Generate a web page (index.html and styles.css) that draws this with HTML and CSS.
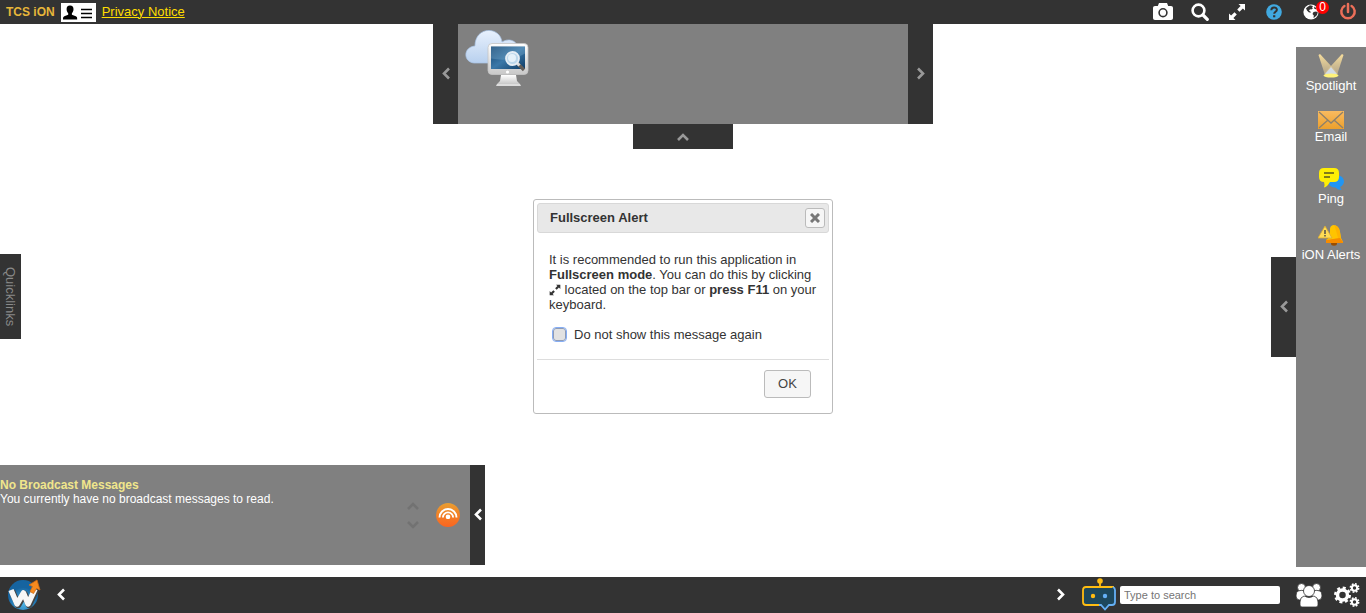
FILE: index.html
```html
<!DOCTYPE html>
<html lang="en">
<head>
<meta charset="utf-8">
<title>TCS iON</title>
<link rel="stylesheet" href="styles.css">
</head>
<body>
<svg class="sprite" aria-hidden="true">
  <symbol id="left" viewBox="0 0 10 14"><path d="M8 1.500 3 6.500l5 5" fill="none" stroke="currentColor" stroke-width="2.600"/></symbol>
  <symbol id="right" viewBox="0 0 10 14"><path d="m2 1.500 5 5-5 5" fill="none" stroke="currentColor" stroke-width="2.600"/></symbol>
  <symbol id="up" viewBox="0 0 14 10"><path d="m2 8 5-5 5 5" fill="none" stroke="currentColor" stroke-width="2.600"/></symbol>
  <symbol id="down" viewBox="0 0 14 10"><path d="m2 2 5 5 5-5" fill="none" stroke="currentColor" stroke-width="2.600"/></symbol>
  <symbol id="expand" viewBox="0 0 18 18"><path d="M10.500 1H17v6.500L14.900 5.400 11.500 8.800 9.200 6.500l3.400-3.400zM7.500 17H1v-6.500l2.100 2.100 3.400-3.400 2.300 2.300-3.400 3.400z" fill="currentColor"/></symbol>
</svg>

<header class="topbar">
  <span class="brand">TCS iON</span>
  <button class="profile" aria-label="Profile">
    <svg width="35" height="19" viewBox="0 0 35 19"><path d="M9 2.500c2.500 0 3.600 1.600 3.500 3.800 0 1.800-.8 3.100-1.600 4v1.400c1.400.8 4 1 4.900 2.200.4.600.4 1.700.4 2.600H2c0-.9 0-2 .4-2.600.9-1.200 3.400-1.400 4.800-2.200v-1.400c-.8-.9-1.600-2.200-1.600-4C5.500 4.100 6.500 2.500 9 2.500z"/><path d="M20 6.500h11M20 10.500h11M20 14.500h11" stroke="#000" stroke-width="1.300"/></svg>
  </button>
  <a class="privacy" href="#">Privacy Notice</a>
  <nav class="tools" aria-label="Tools">
    <button aria-label="Screenshot"><svg width="20" height="20" viewBox="0 0 20 20"><path fill="#fff" fill-rule="evenodd" d="M6 1h8l1.200 3H18c1.200 0 2 .8 2 2v10c0 1.200-.8 2-2 2H2c-1.200 0-2-.8-2-2V6c0-1.200.8-2 2-2h2.800zM10 6a4.700 4.700 0 1 0 0 9.400A4.700 4.700 0 0 0 10 6zm0 1.600a3.100 3.100 0 1 1 0 6.200 3.100 3.100 0 0 1 0-6.200z"/></svg></button>
    <button aria-label="Search"><svg width="18" height="18" viewBox="0 0 18 18"><g fill="none" stroke="#fff"><circle cx="7.500" cy="7.500" r="5.900" stroke-width="2.600"/><path d="m12 12 4.300 4.300" stroke-width="3.200" stroke-linecap="round"/></g></svg></button>
    <button class="white" aria-label="Fullscreen"><svg width="18" height="18"><use href="#expand"/></svg></button>
    <button aria-label="Help"><svg width="16" height="16" viewBox="0 0 16 16"><circle cx="8" cy="8" r="7.800" fill="#41a9e0"/><path d="M5.300 6.200c0-3.600 5.600-3.600 5.600-.4C10.900 7.800 8.200 7.800 8.200 9.800" fill="none" stroke="#333" stroke-width="2"/><path d="M7.100 11.200h2.200v2.100H7.100z" fill="#333"/></svg></button>
    <button class="globe" aria-label="Notifications"><svg width="16" height="16" viewBox="0 0 16 16"><circle cx="8" cy="8" r="7.600" fill="#fff"/><path d="M7 1.200 10 2 9 3.500l1 .8L8.300 5.500 7 5.200 6 6.700l1.500.7.200 1.400-2-.5-1.700-1.700L3 4.200 4.500 3zM10.500 8l2.500-.5 1.800.8-.8 2.700-2.300 2.300-1.200.6.300-2.400-1.300-1.500zM11.500 2.600l2.200 2.200-1.400.4-1.300-1z" fill="#333"/></svg><span class="badge">0</span></button>
    <button aria-label="Log out"><svg width="18" height="20" viewBox="0 0 18 20"><path d="M5.400 4a6.700 6.700 0 1 0 7.200 0M9 2v8" fill="none" stroke="#ec6f59" stroke-width="2.500" stroke-linecap="round"/></svg></button>
  </nav>
</header>

<main class="desktop">
  <section class="launcher" aria-label="Applications">
    <div class="launcher-row">
      <button class="handle" aria-label="Previous"><svg width="10" height="14"><use href="#left"/></svg></button>
      <div class="apps">
        <a href="#" class="app" aria-label="Remote search">
          <svg width="66" height="58" viewBox="0 0 66 58">
            <defs>
              <linearGradient id="cloud" x2="0" y2="1"><stop stop-color="#e8f1fd"/><stop offset="1" stop-color="#b8d0ee"/></linearGradient>
              <linearGradient id="screen" x2="1" y2="1"><stop stop-color="#14426d"/><stop offset=".5" stop-color="#3b78a8"/><stop offset="1" stop-color="#0e3c66"/></linearGradient>
              <linearGradient id="metal" x2="0" y2="1"><stop stop-color="#fff"/><stop offset="1" stop-color="#c8c8c8"/></linearGradient>
            </defs>
            <path d="M10 33C-1 32-1 17 11 16 11-4 36-4 38 12c6-4 14-2 16 5v16z" fill="url(#cloud)" stroke="#a9c4e6" stroke-width=".7"/>
            <path d="M37 45h15l1 6 3 3H33l3-3z" fill="url(#metal)"/><path d="M33 54h23l1 2H32z" fill="#ddd"/>
            <rect x="24" y="13.500" width="40" height="31" rx="4" fill="url(#metal)" stroke="#c4c4c4" stroke-width=".8"/>
            <path d="M27 16.500h34V39H27z" fill="url(#screen)"/><path d="M27 16.500h34v7c-12 7-23 7-34 5z" fill="#8cb9d8" opacity=".3"/>
            <circle cx="43.500" cy="42" r="1.600" fill="#fff"/>
            <path d="m53 33 7 7" stroke="#625d58" stroke-width="3.200"/><path d="m53 33 2.500 2.500" stroke="#ddd" stroke-width="3"/>
            <circle cx="48.500" cy="28.500" r="6.500" fill="#bcd8ec" stroke="#e6eef5" stroke-width="1.800"/><circle cx="48" cy="28" r="4" fill="#e6f2fa"/>
          </svg>
        </a>
      </div>
      <button class="handle" aria-label="Next"><svg width="10" height="14"><use href="#right"/></svg></button>
    </div>
    <button class="launcher-tab" aria-label="Collapse"><svg width="14" height="10"><use href="#up"/></svg></button>
  </section>

  <button class="quicklinks">Quicklinks</button>

  <section class="broadcast">
    <div class="broadcast-text">
      <h2>No Broadcast Messages</h2>
      <p>You currently have no broadcast messages to read.</p>
    </div>
    <div class="scroller">
      <button aria-label="Previous message"><svg width="14" height="10"><use href="#up"/></svg></button>
      <button aria-label="Next message"><svg width="14" height="10"><use href="#down"/></svg></button>
    </div>
    <svg class="feed" width="24" height="24" viewBox="0 0 24 24"><defs><linearGradient id="orange" x2="0" y2="1"><stop stop-color="#e99e31"/><stop offset="1" stop-color="#fa641f"/></linearGradient></defs><circle cx="12" cy="12" r="12" fill="url(#orange)"/><g fill="none" stroke="#fff" stroke-width="1.900"><path d="M3.500 14.500a8.500 8.500 0 0 1 17 0M6.900 14.500a5.100 5.100 0 0 1 10.200 0"/></g><path d="M9.700 13.700a2.300 2.300 0 0 1 4.600 0q0 1.300-1 2.300h-2.600q-1-1-1-2.300z" fill="#fff"/></svg>
    <button class="broadcast-handle" aria-label="Collapse broadcast"><svg width="10" height="14"><use href="#left"/></svg></button>
  </section>

  <aside class="dock">
    <button class="handle" aria-label="Collapse dock"><svg width="10" height="14"><use href="#left"/></svg></button>
    <nav class="dock-items" aria-label="Dock">
      <a href="#"><svg width="28" height="24" viewBox="0 0 28 24"><defs><linearGradient id="beam" x2="0" y2="1"><stop stop-color="#f8de9c"/><stop offset="1" stop-color="#c9b68f" stop-opacity=".7"/></linearGradient></defs><path d="M1.500 1 3 0 21 19.500 8 21z" fill="url(#beam)"/><path d="M26.500 1 25 0 7 19.500 20 21z" fill="url(#beam)"/><path d="m14 13 6 7H8z" fill="#d3dce6"/><ellipse cx="14" cy="21.500" rx="7.500" ry="2" fill="#fff27a"/></svg>Spotlight</a>
      <a href="#"><svg width="26" height="18" viewBox="0 0 26 18"><defs><linearGradient id="mail" x2="0" y2="1"><stop stop-color="#f9bb60"/><stop offset="1" stop-color="#eca02c"/></linearGradient></defs><path d="M0 0h26v18H0z" fill="url(#mail)"/><path d="m1 1 12 11L25 1M1 17l9-8M25 17l-9-8" fill="none" stroke="#8d806b" stroke-width="1.300"/></svg>Email</a>
      <a href="#"><svg width="26" height="29" viewBox="0 0 26 29"><path d="M18 14q7-1 8 5 0 4-4 6l1.500 3q-4 0-6-2.500-6 0-7-5z" fill="#2196f3"/><path d="M6 6h10q5 0 5 5v4q0 5-5 5h-4q-3 5-6 5.500 1-3 0-5.500-5 0-5-5v-4q0-5 5-5z" fill="#ffee05"/><path d="M6 11h10M6 15h6" stroke="#5a5720" stroke-width="1.500"/></svg>Ping</a>
      <a href="#"><svg width="26" height="23" viewBox="0 0 26 23"><ellipse cx="16" cy="19.500" rx="3" ry="2.200" fill="#994d00"/><path d="M12 5q0-3 3-4 6 0 7 7l1 6 2 4H8v-2q4-2 4-8z" fill="#ffc400"/><path d="m17 3 3 11-8 2h-4v3h17l-2-4-1-7q-1-6-6-7z" fill="#ffb300"/><path d="m22 14 3 4v1H8v-3z" fill="#f78c00"/><path d="M7 2 14 14H0z" fill="#ffdc55" stroke="#d9a933" stroke-width=".8"/><path d="M7 6v4M7 11v1.500" stroke="#444" stroke-width="1.400"/></svg>iON Alerts</a>
    </nav>
  </aside>
</main>

<footer class="taskbar">
  <button class="start" aria-label="Start"><svg width="34" height="34" viewBox="0 0 34 34"><defs><radialGradient id="ball" cy=".75"><stop stop-color="#54bdef"/><stop offset="1" stop-color="#1664a0"/></radialGradient></defs><circle cx="16" cy="17" r="15" fill="url(#ball)"/><g fill="none" stroke-linejoin="round"><path d="m5 13 6 14 6.500-11L22 27l7-15" stroke="#444" stroke-width="6.500"/><path d="m4 12 6 14 6.500-11L21 26l7-15" stroke="#f6f6f6" stroke-width="5.500"/></g><path d="m22 7 8-5 3 10-3.500-1.500-3 5-3.500-2 2.500-5z" fill="#f68a1f" stroke="#d26b12" stroke-width=".8"/></svg></button>
  <button class="scroll-back" aria-label="Scroll left"><svg width="10" height="14"><use href="#left"/></svg></button>
  <button class="scroll-next" aria-label="Scroll right"><svg width="10" height="14"><use href="#right"/></svg></button>
  <button class="bot" aria-label="Assistant"><svg width="34" height="34" viewBox="0 0 34 34"><path d="M2 9h30v18H2z" fill="#1d475c"/><path d="M18 3v6M32 9H4Q1 9 1 12v12q0 3 3 3h13" fill="none" stroke="#ffbc12" stroke-width="1.800"/><circle cx="18" cy="3" r="2.800" fill="#ffbc12"/><path d="M31 9q2 1 2 3v12q0 3-3 3h-3l-4 4.500-4-4.500h-2" fill="#1d475c" stroke="#65b0f5" stroke-width="1.800"/><circle cx="11" cy="18" r="2.200" fill="#ffbc12"/><circle cx="23" cy="18" r="2.200" fill="#65b0f5"/></svg></button>
  <input class="search" type="text" placeholder="Type to search" aria-label="Type to search">
  <button class="people" aria-label="People"><svg width="26" height="24" viewBox="0 0 26 24"><g fill="#fff" stroke="#333" stroke-width=".8"><circle cx="5.500" cy="4.500" r="4"/><circle cx="20.500" cy="4.500" r="4"/><path d="M2 8q4-2 8 1v8H3Q0 16 0 13q0-4 2-5zM24 8q-4-2-8 1v8h7q3-1 3-4 0-4-2-5z"/><circle cx="13" cy="8" r="5.500"/><path d="M8 13q5 3 10 0 4 1 4 6v3q0 2-2 2H6q-2 0-2-2v-3q0-5 4-6z"/></g></svg></button>
  <button class="settings" aria-label="Settings"><svg width="26" height="24" viewBox="0 0 26 24"><g fill="none" stroke="#fff"><circle cx="8.500" cy="12" r="5" stroke-width="3.500"/><circle cx="8.500" cy="12" r="7.300" stroke-width="2.400" stroke-dasharray="3 2.733"/><circle cx="20.500" cy="5" r="2.700" stroke-width="2"/><circle cx="20.500" cy="5" r="4.200" stroke-width="1.500" stroke-dasharray="1.800 1.500"/><circle cx="20.500" cy="19" r="2.700" stroke-width="2"/><circle cx="20.500" cy="19" r="4.200" stroke-width="1.500" stroke-dasharray="1.800 1.500"/></g></svg></button>
</footer>

<div class="overlay">
  <div class="dialog" role="dialog" aria-labelledby="alert-title">
    <div class="dialog-head">
      <h1 id="alert-title">Fullscreen Alert</h1>
      <button class="close" aria-label="Close"><svg width="10" height="10" viewBox="0 0 10 10"><path d="m1 1 8 8M9 1 1 9" stroke="#777" stroke-width="3"/></svg></button>
    </div>
    <div class="dialog-body">
      <p>It is recommended to run this application in <b>Fullscreen mode</b>. You can do this by clicking <svg class="inline-icon" width="12" height="12"><use href="#expand"/></svg> located on the top bar or <b>press F11</b> on your keyboard.</p>
      <label class="again"><input type="checkbox">Do not show this message again</label>
    </div>
    <div class="dialog-foot"><button class="ok">OK</button></div>
  </div>
</div>
</body>
</html>
```
FILE: styles.css
```css
* { box-sizing: border-box; }

body {
  display: flex;
  flex-direction: column;
  min-height: 100vh;
  margin: 0;
  background: #fff;
  font: 13px/15px "Liberation Sans", Arial, sans-serif;
}

h1, h2, p { margin: 0; }
a { color: inherit; text-decoration: none; }
svg { display: block; flex: none; }

button {
  display: flex;
  align-items: center;
  justify-content: center;
  padding: 0;
  border: 0;
  background: none;
  color: inherit;
  font: inherit;
}

.sprite { position: absolute; width: 0; height: 0; }

/* Top bar */
.topbar {
  display: flex;
  align-items: center;
  height: 24px;
  padding-left: 6px;
  background: #333;
}
.brand { color: #e8b73a; font-size: 12px; font-weight: bold; }
.profile { margin: 0 6px; background: #fff; }
.privacy { padding-bottom: 2px; color: #fd0; text-decoration: underline; }
.tools { display: flex; gap: 1px; margin-left: auto; }
.tools button { position: relative; width: 36px; height: 24px; }
.white { color: #fff; }
.badge {
  position: absolute;
  top: 1px;
  right: 0;
  width: 13px;
  height: 13px;
  border-radius: 50%;
  background: #f00;
  color: #fff;
  font-size: 12px;
  line-height: 13px;
}

/* Desktop: panels share one cell and dock to its edges */
.desktop { display: grid; flex: 1; }
.desktop > * { grid-area: 1 / 1; }

.handle { width: 25px; height: 100px; background: #333; color: #999; }

.launcher {
  display: flex;
  flex-direction: column;
  align-items: center;
  place-self: start center;
}
.launcher-row { display: flex; }
.apps { width: 450px; padding: 6px; background: #808080; }
.app { display: block; width: 66px; }
.launcher-tab { width: 100px; height: 25px; background: #333; color: #999; }

.quicklinks {
  place-self: center start;
  width: 21px;
  height: 85px;
  margin-bottom: 8px;
  background: #333;
  color: #8a8a8a;
  writing-mode: vertical-rl;
}

.broadcast {
  display: flex;
  align-items: center;
  place-self: end start;
  width: 485px;
  height: 100px;
  margin-bottom: 12px;
  background: #808080;
  color: #fff;
  font-size: 12px;
  line-height: 14px;
}
.broadcast-text { flex: 1; align-self: flex-start; padding-top: 13px; }
.broadcast h2 { color: #f0e68c; font-size: 12px; line-height: 14px; }
.scroller { display: grid; gap: 9px; margin-right: 16px; color: #727272; }
.feed { margin-right: 10px; }
.broadcast-handle { width: 15px; height: 100px; background: #333; }

.dock {
  display: flex;
  align-items: center;
  justify-self: end;
  margin: 23px 0 10px;
}
.dock-items {
  display: flex;
  flex-direction: column;
  gap: 18px;
  align-self: stretch;
  width: 70px;
  padding-top: 7px;
  background: #808080;
  color: #fff;
}
.dock-items a { display: flex; flex-direction: column; align-items: center; }

/* Taskbar */
.taskbar {
  display: flex;
  align-items: center;
  height: 36px;
  padding: 0 6px 0 7px;
  background: #333;
  color: #fff;
}
.scroll-back { margin-left: 15px; }
.scroll-next { margin: 0 16px 0 auto; }
.search {
  width: 160px;
  height: 18px;
  margin: 0 16px 0 4px;
  padding: 0 4px;
  border: 0;
  border-radius: 2px;
  background: #fff;
  font: 11px "Liberation Sans", Arial, sans-serif;
}
.search::placeholder { color: #757575; }
.people { margin-right: 12px; }

/* Alert dialog */
.overlay { position: fixed; inset: 0; display: grid; place-items: center; }
.dialog {
  width: 300px;
  padding: 3px;
  border: 1px solid #bbb;
  border-radius: 3px;
  background: #fff;
  color: #333;
}
.dialog-head {
  display: flex;
  align-items: center;
  justify-content: space-between;
  height: 30px;
  padding: 0 3px 0 12px;
  border: 1px solid #d8d8d8;
  border-radius: 3px;
  background: #e8e8e8;
}
.dialog-head h1 { padding-bottom: 2px; font-size: 13px; line-height: 15px; }
.close {
  width: 20px;
  height: 20px;
  border: 1px solid #bbb;
  border-radius: 3px;
  background: #f6f6f6;
}
.dialog-body { padding: 19px 12px 17px; }
.inline-icon { display: inline-block; vertical-align: -2px; }
.again { display: flex; align-items: center; gap: 8px; margin-top: 15px; }
.again input {
  appearance: none;
  width: 13px;
  height: 13px;
  margin: 0 0 0 4px;
  border: 1px solid #8e9bb5;
  border-radius: 3px;
  outline: 1px solid #86aef5;
  background: #e2e2e2;
}
.dialog-foot {
  display: flex;
  justify-content: flex-end;
  padding: 10px 18px 12px;
  border-top: 1px solid #ddd;
}
.ok {
  width: 47px;
  height: 28px;
  padding-bottom: 2px;
  border: 1px solid #bbb;
  border-radius: 3px;
  background: #f6f6f6;
  color: #444;
}
```
